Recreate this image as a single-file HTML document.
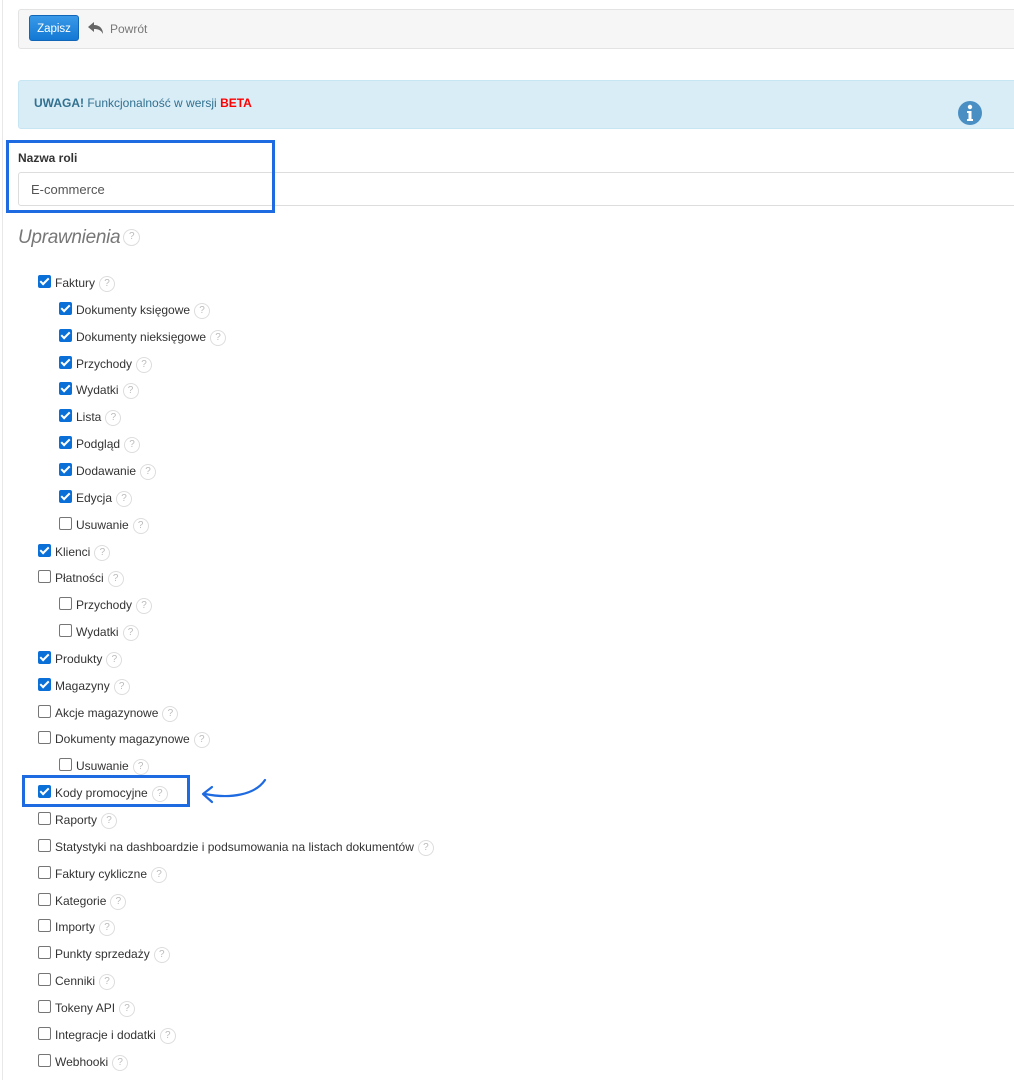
<!DOCTYPE html>
<html><head><meta charset="utf-8"><style>
body{margin:0;width:1014px;height:1080px;background:#fff;font-family:"Liberation Sans",Arial,sans-serif;position:relative;overflow:hidden;color:#333}
.a{position:absolute}
.bar{left:18px;top:9px;width:1010px;height:38px;background:#f6f6f6;border:1px solid #e3e3e3;border-radius:3px}
.btn{left:29px;top:15px;width:50px;height:26px;background:linear-gradient(#3a9ae8,#1278d4);border:1px solid #1266b8;border-radius:3px;color:#fff;font-size:11.5px;line-height:26px;text-align:center;box-sizing:border-box}
.alert{left:18px;top:80px;width:1010px;height:47px;background:#d9edf7;border:1px solid #c7e6f3;border-radius:3px}
.q{display:inline-block;width:14px;height:14px;border:1px solid #ddd;border-radius:50%;font-size:10px;line-height:14px;text-align:center;color:#bbb;vertical-align:middle;margin-left:4px}
.row{position:absolute;font-size:12px;color:#333;line-height:16px;height:16px;white-space:nowrap}
.cb{position:absolute;top:-7px;width:11px;height:11px;border:1px solid #767676;border-radius:2px;background:#fff}
.cb.c{background:#0b6fd8;border-color:#0b6fd8}
.cb.c::after{content:"";position:absolute;left:3px;top:0px;width:3px;height:7px;border:solid #fff;border-width:0 2px 2px 0;transform:rotate(45deg)}
.lb{position:absolute;top:-7px}
</style></head><body>
<div class="a" style="left:2px;top:0;width:1px;height:1080px;background:#e8e8e8"></div>
<div class="a bar"></div>
<div class="a btn">Zapisz</div>
<svg class="a" style="left:88px;top:22px" width="16" height="13" viewBox="0 0 16 13"><path d="M6 0L0 5l6 5V7c4 0 7 1 9 5 0-5-3-9-9-9z" fill="#666"/></svg>
<div class="a" style="left:110px;top:22px;font-size:12px;color:#777">Powrót</div>
<div class="a alert"></div>
<div class="a" style="left:34px;top:96px;font-size:12px;color:#31708f"><b>UWAGA!</b> Funkcjonalność w wersji <b style="color:#f00">BETA</b></div>
<svg class="a" style="left:958px;top:101px" width="24" height="24" viewBox="0 0 24 24"><circle cx="12" cy="12" r="12" fill="#4a8fc4"/><circle cx="12" cy="6" r="2.2" fill="#fff"/><path d="M9 10h4.5v8H15v2H9v-2h1.5v-6H9z" fill="#fff"/></svg>
<div class="a" style="left:18px;top:151px;font-size:12px;font-weight:bold;color:#333">Nazwa roli</div>
<div class="a" style="left:18px;top:172px;width:1010px;height:34px;border:1px solid #ddd;border-radius:3px;box-sizing:border-box"></div>
<div class="a" style="left:31px;top:182px;font-size:13px;color:#555">E-commerce</div>
<div class="a" style="left:6px;top:140px;width:263px;height:67px;border:3px solid #1e6ae0"></div>
<div class="a" style="left:18px;top:227px;font-size:19px;font-style:italic;color:#777;letter-spacing:-0.3px">Uprawnienia<span class="q" style="font-style:normal;width:15px;height:15px;margin-left:3px;letter-spacing:0">?</span></div>
<div id="list"></div>
<div class="a" style="left:22px;top:775px;width:162px;height:26px;border:3px solid #1e6ae0"></div>
<svg class="a" style="left:195px;top:775px" width="75" height="35" viewBox="0 0 75 35"><path d="M70 5C60 20 35 24 10 19" fill="none" stroke="#1e6ae0" stroke-width="2.2" stroke-linecap="round"/><path d="M17 12L8 19L17 27" fill="none" stroke="#1e6ae0" stroke-width="2.2" stroke-linecap="round" stroke-linejoin="round"/></svg>
<script>
var items=[[0,1,"Faktury"],[1,1,"Dokumenty księgowe"],[1,1,"Dokumenty nieksięgowe"],[1,1,"Przychody"],[1,1,"Wydatki"],[1,1,"Lista"],[1,1,"Podgląd"],[1,1,"Dodawanie"],[1,1,"Edycja"],[1,0,"Usuwanie"],[0,1,"Klienci"],[0,0,"Płatności"],[1,0,"Przychody"],[1,0,"Wydatki"],[0,1,"Produkty"],[0,1,"Magazyny"],[0,0,"Akcje magazynowe"],[0,0,"Dokumenty magazynowe"],[1,0,"Usuwanie"],[0,1,"Kody promocyjne"],[0,0,"Raporty"],[0,0,"Statystyki na dashboardzie i podsumowania na listach dokumentów"],[0,0,"Faktury cykliczne"],[0,0,"Kategorie"],[0,0,"Importy"],[0,0,"Punkty sprzedaży"],[0,0,"Cenniki"],[0,0,"Tokeny API"],[0,0,"Integracje i dodatki"],[0,0,"Webhooki"]];
var h="";items.forEach(function(it,i){var y=Math.round(282+i*26.85);var x=it[0]?59:38;
h+='<div class="row" style="left:'+x+'px;top:'+y+'px"><span class="cb'+(it[1]?' c':'')+'" style="left:0"></span><span class="lb" style="left:17px">'+it[2]+'<span class="q">?</span></span></div>';});
document.getElementById("list").innerHTML=h;
</script>
</body></html>
